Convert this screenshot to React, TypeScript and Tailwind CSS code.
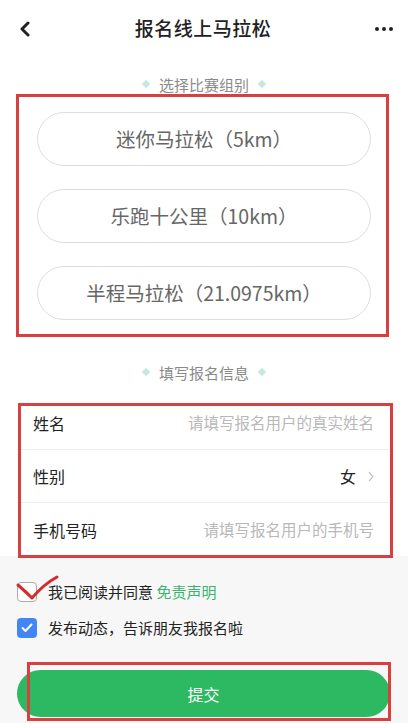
const groups = ['迷你马拉松（5km）', '乐跑十公里（10km）', '半程马拉松（21.0975km）']

function SectionTitle({ text }: { text: string }) {
  return (
    <div className="flex items-center justify-center gap-[10px] h-[20px]">
      <span className="w-[6px] h-[6px] rotate-45 bg-[#c6e9df]" />
      <span className="text-[15px] text-[#8a8a8a] leading-none">{text}</span>
      <span className="w-[6px] h-[6px] rotate-45 bg-[#c6e9df]" />
    </div>
  )
}

function FormRow({ label, children, last }: { label: string; children: React.ReactNode; last?: boolean }) {
  return (
    <div className={`h-[53px] mx-[17px] flex items-center justify-between pl-[16px] pr-[17px] ${last ? '' : 'border-b border-[#efefef]'}`}>
      <span className="text-[16px] text-[#222]">{label}</span>
      {children}
    </div>
  )
}

export default function App() {
  return (
    <div
      className="relative w-full min-h-[723px] bg-[#f7f7f7]"
      style={{ fontFamily: '"Noto Sans CJK SC", "Noto Sans", sans-serif' }}
    >
      <div className="bg-white">
        <header className="h-[57px] flex items-center justify-between px-[18px]">
          <svg width="12" height="16" viewBox="0 0 12 16" className="ml-[1px]">
            <path d="M9 2 L3 8 L9 14" fill="none" stroke="#222" strokeWidth="3" strokeLinecap="round" strokeLinejoin="round" />
          </svg>
          <h1 className="text-[19px] font-medium text-[#222] tracking-[0.5px]">报名线上马拉松</h1>
          <div className="flex gap-[3px] mr-[-3px]">
            <span className="w-[4px] h-[4px] rounded-full bg-[#222]" />
            <span className="w-[4px] h-[4px] rounded-full bg-[#222]" />
            <span className="w-[4px] h-[4px] rounded-full bg-[#222]" />
          </div>
        </header>

        <div className="mt-[17px]">
          <SectionTitle text="选择比赛组别" />
        </div>

        <div className="mt-[18px] flex flex-col items-center gap-[23px]">
          {groups.map((g) => (
            <button
              key={g}
              className="w-[334px] h-[54px] rounded-full border border-[#dedede] bg-white text-[19.5px] text-[#666]"
            >
              {g}
            </button>
          ))}
        </div>

        <div className="mt-[42px]">
          <SectionTitle text="填写报名信息" />
        </div>

        <div className="mt-[15px]">
          <FormRow label="姓名">
            <span className="text-[15.5px] text-[#b8b8b8]">请填写报名用户的真实姓名</span>
          </FormRow>
          <FormRow label="性别">
            <span className="flex items-center gap-[12px]">
              <span className="text-[16px] text-[#222]">女</span>
              <svg width="6" height="11" viewBox="0 0 6 11">
                <path d="M1 1 L5 5.5 L1 10" fill="none" stroke="#c4c4c4" strokeWidth="1.2" />
              </svg>
            </span>
          </FormRow>
          <FormRow label="手机号码" last>
            <span className="text-[15.5px] text-[#b8b8b8]">请填写报名用户的手机号</span>
          </FormRow>
        </div>
      </div>

      <div className="px-[17px] pt-[26px]">
        <label className="flex items-center gap-[11px] h-[20px]">
          <span className="w-[20px] h-[20px] rounded-[4px] border-[1.5px] border-[#a9a9a9] bg-white" />
          <span className="text-[15px] text-[#222]">
            我已阅读并同意 <span className="text-[#3cb371]">免责声明</span>
          </span>
        </label>
        <label className="mt-[16px] flex items-center gap-[11px] h-[20px]">
          <span className="w-[20px] h-[20px] rounded-[4px] bg-[#4285f4] flex items-center justify-center">
            <svg width="12" height="10" viewBox="0 0 12 10">
              <path d="M1.5 5 L4.5 8 L10.5 1.5" fill="none" stroke="#fff" strokeWidth="2" strokeLinecap="round" strokeLinejoin="round" />
            </svg>
          </span>
          <span className="text-[15px] text-[#222]">发布动态，告诉朋友我报名啦</span>
        </label>
        <button className="mt-[32px] w-[373px] h-[47px] rounded-full bg-[#2db862] text-white text-[16px]">
          提交
        </button>
      </div>

      {/* annotations drawn over the screenshot */}
      <div className="absolute left-[16px] top-[94px] w-[373px] h-[243px] border-[3px] border-[#d8403f] pointer-events-none" />
      <div className="absolute left-[18px] top-[403px] w-[375px] h-[155px] border-[3px] border-[#d8403f] pointer-events-none" />
      <div className="absolute left-[27px] top-[662px] w-[364px] h-[59px] border-[3px] border-[#d8403f] pointer-events-none" />
      <svg className="absolute left-0 top-[570px] pointer-events-none" width="70" height="40" viewBox="0 0 70 40">
        <path d="M18 15 Q26 22 32 28 Q44 14 57 7" fill="none" stroke="#d52b2b" strokeWidth="3" strokeLinecap="round" strokeLinejoin="round" />
      </svg>
    </div>
  )
}
